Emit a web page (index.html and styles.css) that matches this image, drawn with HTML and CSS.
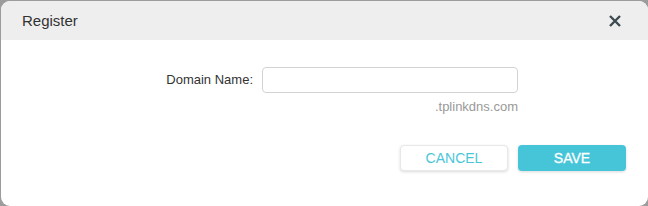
FILE: index.html
```html
<!DOCTYPE html>
<html lang="en">
<head>
    <meta charset="UTF-8">
    <title>Register</title>
    <link rel="stylesheet" href="styles.css">
</head>
<body>
    <div class="dialog">
        <!-- header -->
        <div class="dialog-head">
            <span class="dialog-title">Register</span>
            <span class="close-btn">
                <svg width="14" height="14" viewBox="0 0 14 14">
                    <path d="M2 2 L12 12 M12 2 L2 12" stroke="#3d4a50" stroke-width="2.4" stroke-linecap="butt"/>
                </svg>
            </span>
        </div>

        <!-- form -->
        <div class="dialog-body">
            <div class="form-row">
                <label for="domainName">Domain Name:</label>
                <div class="field">
                    <input type="text" id="domainName">
                    <div class="suffix">.tplinkdns.com</div>
                </div>
            </div>
            <div class="actions">
                <button class="btn btn-cancel">CANCEL</button>
                <button class="btn btn-save">SAVE</button>
            </div>
        </div>
    </div>
</body>
</html>
```

FILE: styles.css
```css
html, body { margin: 0; padding: 0; }
body {
    width: 648px;
    height: 206px;
    background-color: #9c9c9c;
    font-family: "Liberation Sans", Arial, sans-serif;
    overflow: hidden;
}
.dialog {
    margin: 1px 0 0 1px;
    width: 647px;
    height: 205px;
    background-color: #fff;
    border-radius: 9px;
    overflow: hidden;
}
.dialog-head {
    height: 39px;
    background-color: #eeeeee;
    display: flex;
    align-items: center;
    justify-content: space-between;
    padding: 0 26px 0 21px;
}
.dialog-title {
    font-size: 15px;
    color: #333;
}
.close-btn {
    display: flex;
    cursor: pointer;
}
.dialog-body {
    padding-top: 27px;
}
.form-row {
    display: flex;
    align-items: flex-start;
}
.form-row label {
    width: 252px;
    text-align: right;
    font-size: 13px;
    color: #333;
    line-height: 26px;
    margin-right: 9px;
}
.field {
    width: 256px;
}
.field input {
    box-sizing: border-box;
    width: 256px;
    height: 26px;
    border: 1px solid #d2d2d2;
    border-radius: 4px;
    padding: 0 8px;
    font-size: 13px;
    outline: none;
}
.suffix {
    text-align: right;
    font-size: 13px;
    color: #999;
    margin-top: 6px;
}
.actions {
    display: flex;
    justify-content: flex-end;
    gap: 10px;
    padding-right: 22px;
    margin-top: 31px;
}
.btn {
    width: 108px;
    height: 26px;
    border-radius: 4px;
    font-family: "Liberation Sans", Arial, sans-serif;
    font-size: 14px;
    cursor: pointer;
}
.btn-cancel {
    background-color: #fff;
    color: #4ac6d8;
    border: 1px solid #e8e8e8;
    box-shadow: 0 1px 3px rgba(0, 0, 0, 0.15);
}
.btn-save {
    background-color: #47c5d8;
    color: #fff;
    border: none;
    -webkit-text-stroke: 0.3px #fff;
    box-shadow: 0 1px 3px rgba(0, 0, 0, 0.15);
}
```
